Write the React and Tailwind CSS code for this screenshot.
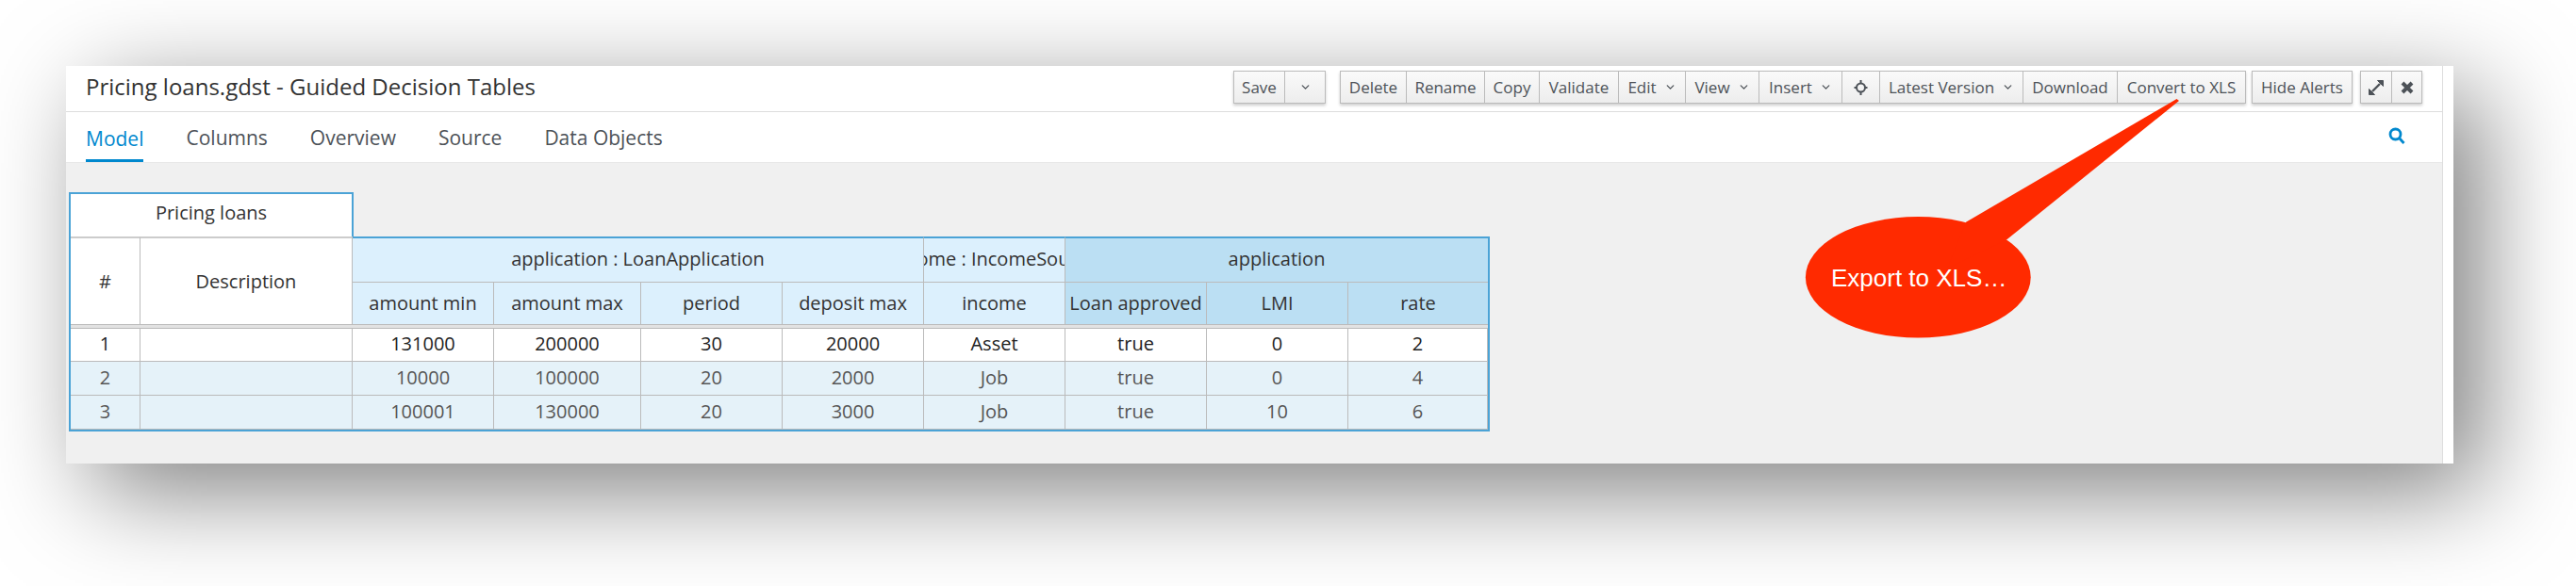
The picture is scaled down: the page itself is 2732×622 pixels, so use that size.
import { ChevronDown } from 'lucide-react'

const font = "font-['Open_Sans',sans-serif]"

function Btn({ children, className = '' }) {
  return (
    <div className={`flex h-[33px] items-center justify-center gap-[8px] whitespace-nowrap border-r border-[#bbbbbb] bg-gradient-to-b from-[#fafafa] to-[#ededed] text-[17px] font-medium text-[#4d5258] ${className}`}>
      {children}
    </div>
  )
}

function Group({ children, className = '' }) {
  return (
    <div className={`flex border-y border-l border-[#bbbbbb] shadow-[0_2px_3px_rgba(0,0,0,0.2)] ${className}`}>
      {children}
    </div>
  )
}

const Caret = () => <ChevronDown size={13} strokeWidth={2.4} className="text-[#4d5258]" />

function Toolbar() {
  return (
    <div className="flex">
      <Group className="mr-[15px]">
        <Btn className="w-[54px]">Save</Btn>
        <Btn className="w-[43px]"><Caret /></Btn>
      </Group>
      <Group className="mr-[6px]">
        <Btn className="w-[70px]">Delete</Btn>
        <Btn className="w-[83px]">Rename</Btn>
        <Btn className="w-[58px]">Copy</Btn>
        <Btn className="w-[84px]">Validate</Btn>
        <Btn className="w-[71px]">Edit <Caret /></Btn>
        <Btn className="w-[78px]">View <Caret /></Btn>
        <Btn className="w-[88px]">Insert <Caret /></Btn>
        <Btn className="w-[40px]">
          <svg width="15" height="18" viewBox="0 0 15 18" fill="none" stroke="#4d5258" strokeWidth="2">
            <circle cx="7.5" cy="9" r="4.5" />
            <path d="M7.5 1v4M7.5 13v4M0.500 9h3M11.500 9h3" />
          </svg>
        </Btn>
        <Btn className="w-[152px]">Latest Version <Caret /></Btn>
        <Btn className="w-[100px]">Download</Btn>
        <Btn className="w-[136px]">Convert to XLS</Btn>
      </Group>
      <Group className="mr-[8px]">
        <Btn className="w-[106px]">Hide Alerts</Btn>
      </Group>
      <Group>
        <Btn className="w-[33px]">
          <svg width="16" height="16" viewBox="0 0 16 16" fill="#4d5258" stroke="#4d5258">
            <path d="M9.500 .5h6v6zM.5 9.500v6h6z" strokeWidth="1" />
            <path d="M4 12l8-8" strokeWidth="2.400" />
          </svg>
        </Btn>
        <Btn className="w-[32px]">
          <svg width="14" height="14" viewBox="0 0 14 14" stroke="#4d5258" strokeWidth="4">
            <path d="M2 2l10 10M12 2L2 12" />
          </svg>
        </Btn>
      </Group>
    </div>
  )
}

function Tabs() {
  return (
    <div className="flex h-[54px] items-stretch justify-between border-b border-[#e8e8e8] pl-[21px] pr-[39px]">
      <div className="flex gap-[45px] text-[21px] text-[#4d5258]">
        <div className="flex items-center border-b-[3px] border-[#0088ce] pt-[7px] text-[#0088ce]">Model</div>
        <div className="flex items-center pt-[3px]">Columns</div>
        <div className="flex items-center pt-[3px]">Overview</div>
        <div className="flex items-center pt-[3px]">Source</div>
        <div className="flex items-center pt-[3px]">Data Objects</div>
      </div>
      <div className="flex items-center pb-[3px]">
        <svg width="18" height="18" viewBox="0 0 18 18" fill="none" stroke="#0088ce" strokeWidth="2.800">
          <circle cx="7.500" cy="7.500" r="5.500" />
          <path d="M11.500 11.500l5 5.500" />
        </svg>
      </div>
    </div>
  )
}

const head = 'flex items-center justify-center overflow-hidden whitespace-nowrap border-r border-b border-[#bbbbbb]'
const blueTop = 'border-t-2 border-t-[#4ba3d6]'
const light = 'bg-[#dcf0fd]'
const dark = 'bg-[#bbdff3]'

const rows = [
  { values: ['1', '', '131000', '200000', '30', '20000', 'Asset', 'true', '0', '2'], first: true },
  { values: ['2', '', '10000', '100000', '20', '2000', 'Job', 'true', '0', '4'] },
  { values: ['3', '', '100001', '130000', '20', '3000', 'Job', 'true', '10', '6'] },
]

function DecisionTable() {
  return (
    <div className="w-[1507px] text-[20px] text-[#333333]">
      <div className="flex h-[47px] w-[302px] items-center justify-center border-x-2 border-t-2 border-[#4ba3d6] bg-white pb-[5px]">
        Pricing loans
      </div>
      <div className="grid grid-cols-[74px_225px_150px_156px_150px_150px_150px_150px_150px_148px] grid-rows-[49px_45px_4px_35px_36px_36px] border-x-2 border-b-2 border-[#4ba3d6]">
        <div className={`${head} row-span-2 border-t-2 border-t-[#cccccc] bg-white`}>#</div>
        <div className={`${head} row-span-2 border-t-2 border-t-[#cccccc] bg-white`}>Description</div>
        <div className={`${head} ${blueTop} ${light} col-span-4 pb-[2px]`}>application : LoanApplication</div>
        <div className={`${head} ${blueTop} ${light} pb-[2px]`}><span className="shrink-0">income : IncomeSource</span></div>
        <div className={`${head} ${blueTop} ${dark} col-span-3 border-r-0 pb-[2px]`}>application</div>
        <div className={`${head} ${light}`}>amount min</div>
        <div className={`${head} ${light}`}>amount max</div>
        <div className={`${head} ${light}`}>period</div>
        <div className={`${head} ${light}`}>deposit max</div>
        <div className={`${head} ${light}`}>income</div>
        <div className={`${head} ${dark}`}>Loan approved</div>
        <div className={`${head} ${dark}`}>LMI</div>
        <div className={`${head} ${dark} border-r-0`}>rate</div>
        <div className="col-span-full border-b border-[#bbbbbb] bg-[#e2e2e2]" />
        {rows.map((row) =>
          row.values.map((value, i) => (
            <div
              key={row.values[0] + '-' + i}
              className={`flex items-center justify-center border-b border-r border-[#bbbbbb] pb-[2px] ${row.first ? 'bg-white text-[#222222]' : 'bg-[#e5f2f9] text-[#555555]'}`}
            >
              {value}
            </div>
          ))
        )}
      </div>
    </div>
  )
}

function Callout() {
  return (
    <div className="absolute left-[1775px] top-[-5px] h-[300px] w-[480px]">
      <svg width="480" height="300" viewBox="0 0 480 300" className="absolute inset-0">
        <ellipse cx="189.300" cy="229.300" rx="119.400" ry="64.300" fill="#ff2a00" />
        <path d="M240 170.700L463.500 40L466 42L283.700 189L220 220Z" fill="#ff2a00" />
      </svg>
      <div className="absolute left-[97px] top-[210px] whitespace-nowrap font-['Liberation_Sans',sans-serif] text-[26px] leading-[40px] text-white">
        Export to XLS…
      </div>
    </div>
  )
}

export default function App() {
  return (
    <div className={`min-h-[622px] overflow-hidden bg-white pl-[70px] pt-[70px] ${font}`}>
      <div className="relative flex h-[422px] w-[2532px] bg-white shadow-[29px_29px_100px_rgba(0,0,0,0.5)]">
        <div className="flex min-w-0 flex-1 flex-col border-r border-[#dddddd]">
          <div className="flex h-[49px] items-center justify-between border-b border-[#dddddd] pb-[3px] pl-[21px] pr-[21px]">
            <h1 className="mb-[2px] text-[24px] text-[#333333]">Pricing loans.gdst - Guided Decision Tables</h1>
            <Toolbar />
          </div>
          <Tabs />
          <div className="flex-1 bg-[#f0f0f0] pl-[3px] pt-[31px]">
            <DecisionTable />
          </div>
        </div>
        <div className="w-[11px]" />
        <Callout />
      </div>
    </div>
  )
}
